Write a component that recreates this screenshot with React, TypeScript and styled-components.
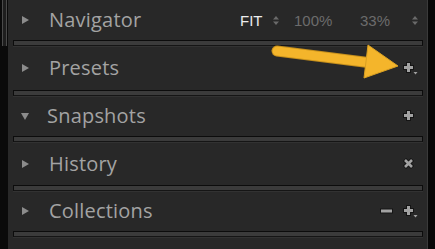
import React from "react";
import styled, { createGlobalStyle } from "styled-components";

const Global = createGlobalStyle`
  html, body { margin: 0; padding: 0; background: #0a0a0a; }
  body { width: 435px; height: 249px; overflow: hidden; }
`;

const Frame = styled.div`
  position: relative;
  display: flex;
  width: 435px;
  height: 249px;
  background: #0a0a0a;
  font-family: "Open Sans", "Noto Sans", sans-serif;
`;

const Gutter = styled.div`
  width: 8px;
  display: flex;
  flex-direction: column;
`;

const ScrollStub = styled.div`
  height: 46px;
  box-sizing: border-box;
  margin-left: 2px;
  width: 5px;
  border-left: 1px solid #4a4a4a;
  border-right: 1px solid #4a4a4a;
  background: #1e1e1e;
`;

const Panel = styled.div`
  flex: 1;
  background: #282828;
  display: flex;
  flex-direction: column;
  border-right: 1px solid #3a3a3a;
`;

const RightEdge = styled.div`
  width: 7px;
  background: #080808;
`;

const Header = styled.div<{ $h: number }>`
  height: ${(p) => p.$h}px;
  display: flex;
  align-items: center;
  padding: 0 9px 0 14px;
`;

const Twisty = styled.span<{ $open?: boolean }>`
  width: 0;
  height: 0;
  margin-right: 20px;
  ${(p) =>
    p.$open
      ? `border-left: 4.5px solid transparent; border-right: 4.5px solid transparent; border-top: 7px solid #8c8c8c; margin-left: -1px; margin-right: 18px;`
      : `border-top: 4.5px solid transparent; border-bottom: 4.5px solid transparent; border-left: 7px solid #8c8c8c;`}
`;

const Title = styled.span`
  font-size: 20px;
  color: #a3a3a3;
  letter-spacing: 0.2px;
  line-height: 1;
`;

const Tools = styled.div`
  margin-left: auto;
  display: flex;
  align-items: center;
  gap: 10px;
`;

const Bar = styled.div`
  height: 4px;
  margin: 0 4px 0 5px;
  border: 1px solid #0c0c0c;
  border-bottom-color: #151515;
  background: #3b3b3b;
  box-shadow: 0 1px 0 #323232;
`;

const Zoom = styled.div`
  margin-left: auto;
  display: flex;
  align-items: center;
  font-family: "Liberation Sans", Arial, sans-serif;
  font-size: 15px;
  color: #6f6f6f;
`;

const ZoomItem = styled.span<{ $active?: boolean; $w: number }>`
  width: ${(p) => p.$w}px;
  color: ${(p) => (p.$active ? "#ececec" : "#6c6c6c")};
`;

const Stepper = () => (
  <svg width="6" height="9" viewBox="0 0 6 9">
    <polygon points="3,0 6,3.5 0,3.5" fill="#6a6a6a" />
    <polygon points="3,9 6,5.5 0,5.5" fill="#6a6a6a" />
  </svg>
);

const IconBox = styled.span`
  display: inline-flex;
`;

const Plus = ({ menu }: { menu?: boolean }) => (
  <IconBox>
    <svg width="15" height="13" viewBox="0 0 15 13">
      <path d="M5.5 0 V11 M0 5.5 H11" stroke="#141414" strokeWidth="5" />
      <path d="M5.5 1 V10 M1 5.5 H10" stroke="#a2a2a2" strokeWidth="3" />
      {menu && <polygon points="10.5,10 14.5,10 12.5,12.5" fill="#a2a2a2" />}
    </svg>
  </IconBox>
);

const Minus = () => (
  <IconBox>
    <svg width="13" height="6" viewBox="0 0 13 6">
      <path d="M0 3 H13" stroke="#141414" strokeWidth="5" />
      <path d="M1 3 H12" stroke="#a2a2a2" strokeWidth="3" />
    </svg>
  </IconBox>
);

const Cross = () => (
  <IconBox>
    <svg width="15" height="12" viewBox="0 0 15 12">
      <path d="M1.5 1.5 L9.5 9.5 M9.5 1.5 L1.5 9.5" stroke="#141414" strokeWidth="4.5" />
      <path d="M2 2 L9 9 M9 2 L2 9" stroke="#a2a2a2" strokeWidth="2.6" />
    </svg>
  </IconBox>
);

const ArrowLayer = styled.svg`
  position: absolute;
  left: 0;
  top: 0;
  pointer-events: none;
`;

type Sec = { title: string; h: number; open?: boolean; tools?: React.ReactNode; nav?: boolean };

const sections: Sec[] = [
  { title: "Navigator", h: 40, nav: true },
  { title: "Presets", h: 44, tools: <Plus menu /> },
  { title: "Snapshots", h: 40, open: true, tools: <Plus /> },
  { title: "History", h: 43, tools: <Cross /> },
  { title: "Collections", h: 40, tools: (<><Minus /><Plus menu /></>) },
];

export default function App() {
  return (
    <Frame>
      <Global />
      <Gutter>
        <ScrollStub />
      </Gutter>
      <Panel>
        {sections.map((s) => (
          <React.Fragment key={s.title}>
            <Header $h={s.h}>
              <Twisty $open={s.open} />
              <Title>{s.title}</Title>
              {s.nav ? (
                <Zoom>
                  <ZoomItem $active $w={33}>FIT</ZoomItem>
                  <Stepper />
                  <ZoomItem $w={15} />
                  <ZoomItem $w={66}>100%</ZoomItem>
                  <ZoomItem $w={52}>33%</ZoomItem>
                  <Stepper />
                </Zoom>
              ) : (
                <Tools>{s.tools}</Tools>
              )}
            </Header>
            <Bar />
          </React.Fragment>
        ))}
      </Panel>
      <RightEdge />
      <ArrowLayer width="435" height="249" viewBox="0 0 435 249">
        <path d="M277 51 L372 63" stroke="#c58f1c" strokeWidth="11" strokeLinecap="round" />
        <path d="M277 51 L372 63" stroke="#f4b52b" strokeWidth="9" strokeLinecap="round" />
        <polygon points="368,45 398,66 364,78" fill="#f4b52b" stroke="#d9a022" strokeWidth="1" strokeLinejoin="round" />
      </ArrowLayer>
    </Frame>
  );
}
